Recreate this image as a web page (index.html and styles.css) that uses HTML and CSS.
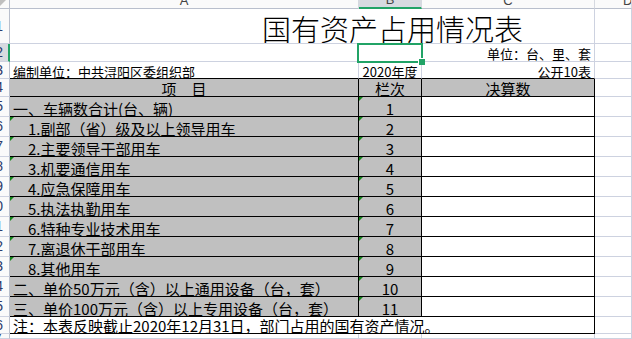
FILE: index.html
```html
<!DOCTYPE html>
<html lang="zh-CN">
<head>
<meta charset="utf-8">
<title>国有资产占用情况表</title>
<link rel="stylesheet" href="styles.css">
</head>
<body>
<div class="sheet">
  <div class="c ch corner"><span class="corner-tri"></span></div>
  <div class="c ch">A</div>
  <div class="c ch sel-col">B</div>
  <div class="c ch">C</div>
  <div class="c ch chd">D</div>

  <div class="c rh"><span>1</span></div>
  <div class="c title span3">国有资产占用情况表</div>
  <div class="c"></div>

  <div class="c rh sel-row"><span>2</span></div>
  <div class="c"></div>
  <div class="c sel"><span class="selbox"></span></div>
  <div class="c s rt pb1">单位：台、里、套</div>
  <div class="c"></div>

  <div class="c rh"><span>3</span></div>
  <div class="c s pl bb">编制单位：中共浔阳区委组织部</div>
  <div class="c s ctr bb">2020年度</div>
  <div class="c s rt bb">公开10表</div>
  <div class="c"></div>

  <div class="c rh"><span>4</span></div>
  <div class="c t g b ctr">项　目</div>
  <div class="c t g b ctr">栏次</div>
  <div class="c t g b ctr">决算数</div>
  <div class="c"></div>

  <div class="c rh"><span>5</span></div>
  <div class="c t g b pl">一、车辆数合计(台、辆)</div>
  <div class="c t g b ctr tri">1</div>
  <div class="c b"></div>
  <div class="c"></div>

  <div class="c rh"><span>6</span></div>
  <div class="c t g b ind tri">1.副部（省）级及以上领导用车</div>
  <div class="c t g b ctr tri">2</div>
  <div class="c b"></div>
  <div class="c"></div>

  <div class="c rh"><span>7</span></div>
  <div class="c t g b ind tri">2.主要领导干部用车</div>
  <div class="c t g b ctr tri">3</div>
  <div class="c b"></div>
  <div class="c"></div>

  <div class="c rh"><span>8</span></div>
  <div class="c t g b ind tri">3.机要通信用车</div>
  <div class="c t g b ctr tri">4</div>
  <div class="c b"></div>
  <div class="c"></div>

  <div class="c rh"><span>9</span></div>
  <div class="c t g b ind tri">4.应急保障用车</div>
  <div class="c t g b ctr tri">5</div>
  <div class="c b"></div>
  <div class="c"></div>

  <div class="c rh"><span>10</span></div>
  <div class="c t g b ind tri">5.执法执勤用车</div>
  <div class="c t g b ctr tri">6</div>
  <div class="c b"></div>
  <div class="c"></div>

  <div class="c rh"><span>11</span></div>
  <div class="c t g b ind tri">6.特种专业技术用车</div>
  <div class="c t g b ctr tri">7</div>
  <div class="c b"></div>
  <div class="c"></div>

  <div class="c rh"><span>12</span></div>
  <div class="c t g b ind tri">7.离退休干部用车</div>
  <div class="c t g b ctr tri">8</div>
  <div class="c b"></div>
  <div class="c"></div>

  <div class="c rh"><span>13</span></div>
  <div class="c t g b ind tri">8.其他用车</div>
  <div class="c t g b ctr tri">9</div>
  <div class="c b"></div>
  <div class="c"></div>

  <div class="c rh"><span>14</span></div>
  <div class="c t g b pl">二、单价50万元（含）以上通用设备（台，套）</div>
  <div class="c t g b ctr tri">10</div>
  <div class="c b"></div>
  <div class="c"></div>

  <div class="c rh"><span>15</span></div>
  <div class="c t g b pl">三、单价100万元（含）以上专用设备（台，套）</div>
  <div class="c t g b ctr tri">11</div>
  <div class="c b"></div>
  <div class="c"></div>

  <div class="c rh"><span>16</span></div>
  <div class="c t b pl span3">注：本表反映截止2020年12月31日，部门占用的国有资产情况。</div>
  <div class="c"></div>

  <div class="c rh"><span>17</span></div>
  <div class="c"></div>
  <div class="c"></div>
  <div class="c"></div>
  <div class="c"></div>
</div>
</body>
</html>
```

FILE: styles.css
```css
* { box-sizing: border-box; margin: 0; padding: 0; }
html, body { width: 632px; height: 339px; overflow: hidden; background: #fff; }
body { font-family: "Noto Sans CJK SC", sans-serif; color: #000; }

.sheet {
  display: grid;
  grid-template-columns: 10px 349px 63px 173px 37px;
  grid-template-rows: 9px 35px 18px 17px 18px repeat(11, 20px) 17px 5px;
}

.c {
  position: relative;
  display: flex;
  align-items: flex-end;
  overflow: hidden;
  white-space: nowrap;
  border-right: 1px solid #cdd2e0;
  border-bottom: 1px solid #cdd2e0;
}

.span3 { grid-column: span 3; }

/* headers */
.ch {
  justify-content: center;
  font-family: "Liberation Sans", sans-serif;
  font-size: 13px;
  line-height: 13px;
  padding-bottom: 1px;
  color: #444;
  background: #fafafa;
  border-bottom-color: #b9bfcc;
  border-right-color: #d6d9e0;
}
.chd { justify-content: flex-start; padding-left: 28px; }
.corner { background: #fafafa; border-right-color: #b9bfcc; }
.corner-tri {
  position: absolute; left: 0; top: 0;
  border-top: 6px solid #bfbfbf; border-right: 6px solid transparent;
}
.rh {
  align-items: center;
  font-family: "Liberation Sans", sans-serif;
  font-size: 14px;
  line-height: 15px;
  color: #2b3b6c;
  background: #fafafa;
  border-right-color: #b9bfcc;
}
.rh span {
  flex: 0 0 24px;
  width: 24px;
  margin-left: -21px;
  text-align: right;
}
.sel-col { background: #d7dae0; border-bottom: 2px solid #21a366; }
.sel-row { background: #d7dae0; border-right: 2px solid #21a366; }

/* cell content */
.title {
  font-size: 29px;
  line-height: 29px;
  font-weight: 300;
  padding-left: 252px;
}
.t { font-size: 15px; line-height: 15px; }
.s { font-size: 13px; line-height: 13px; }
.g { background: #c0c0c0; }
.b { border-right-color: #000; border-bottom-color: #000; }
.bb { border-bottom-color: #000; }
.ctr { justify-content: center; }
.rt { justify-content: flex-end; padding-right: 3px; }
.pl { padding-left: 3px; }
.ind { padding-left: 18px; }
.pb1 { padding-bottom: 1px; }

.tri::before {
  content: "";
  position: absolute; left: 0; top: 0;
  border-top: 4px solid #13851a;
  border-right: 4px solid transparent;
}

/* selection */
.sel { overflow: visible; z-index: 2; }
.selbox {
  position: absolute;
  left: -2px; top: -1px; right: -2px; bottom: -2px;
  border: 2px solid #21a366;
}
.selbox::after {
  content: "";
  position: absolute;
  right: -4px; bottom: -4px;
  width: 6px; height: 6px;
  background: #21a366;
  border-left: 1px solid #fff;
  border-top: 1px solid #fff;
}
```
